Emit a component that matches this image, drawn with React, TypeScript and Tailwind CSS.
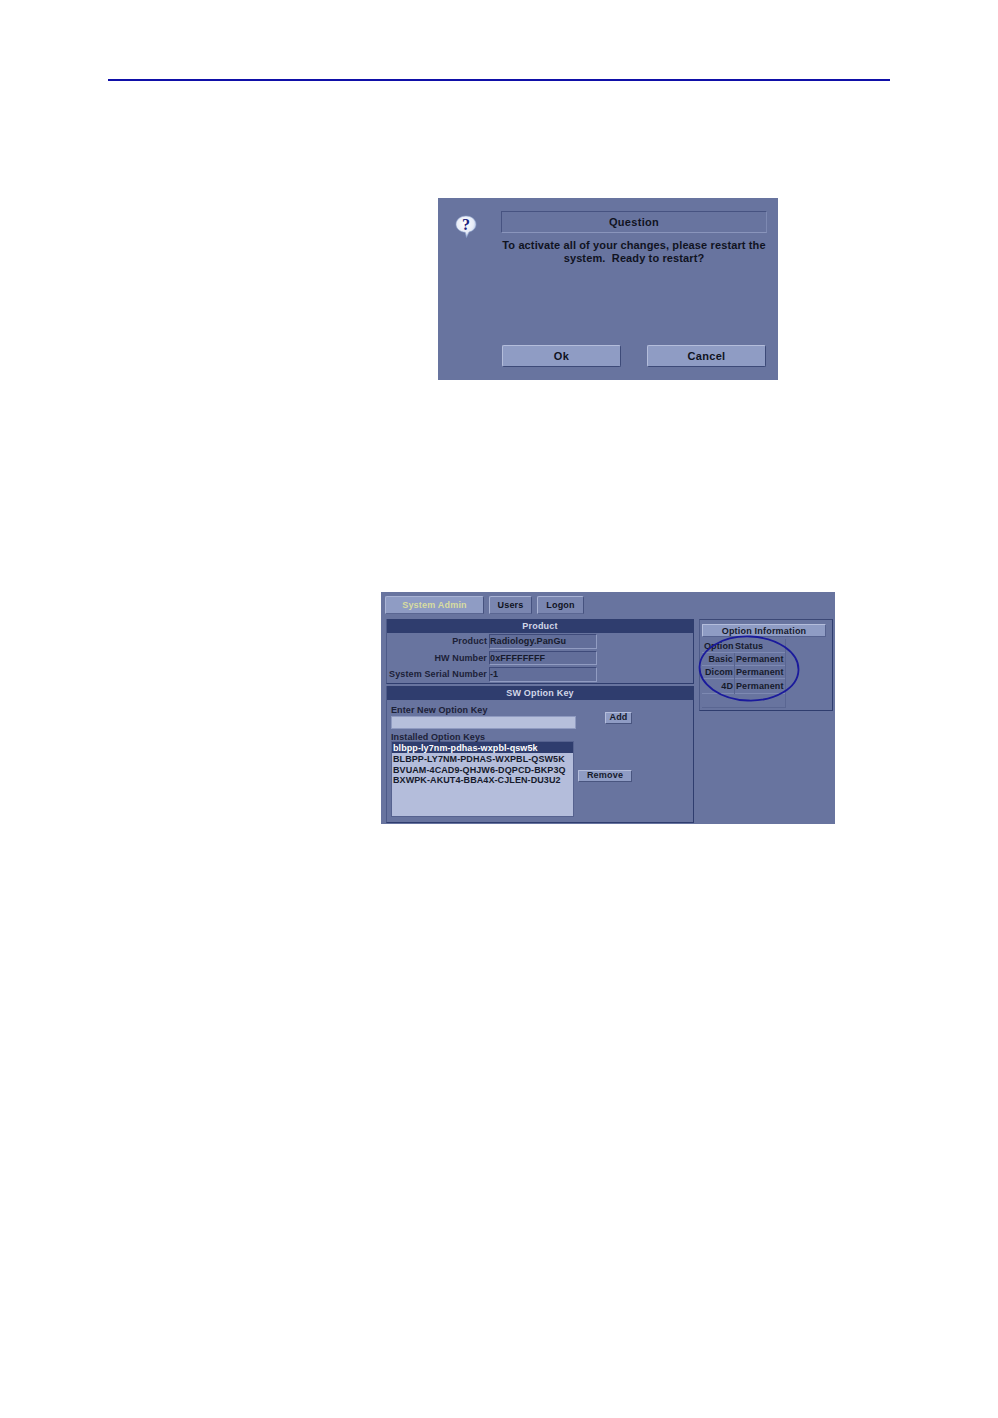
const font = "font-['Liberation_Sans',Arial,sans-serif]";

const optionKeys = [
  "BLBPP-LY7NM-PDHAS-WXPBL-QSW5K",
  "BVUAM-4CAD9-QHJW6-DQPCD-BKP3Q",
  "BXWPK-AKUT4-BBA4X-CJLEN-DU3U2",
];

const productRows = [
  { label: "Product", value: "Radiology.PanGu" },
  { label: "HW Number", value: "0xFFFFFFFF" },
  { label: "System Serial Number", value: "-1" },
];

const optionRows = [
  { name: "Basic", status: "Permanent", height: "h-[13px]" },
  { name: "Dicom", status: "Permanent", height: "h-[13px]" },
  { name: "4D", status: "Permanent", height: "h-[15px]" },
];

function QuestionIcon() {
  return (
    <svg width="22" height="24" viewBox="0 0 22 24">
      <defs>
        <radialGradient id="bubble" cx="45%" cy="35%" r="65%">
          <stop offset="0%" stopColor="#ffffff" />
          <stop offset="65%" stopColor="#e6ebf7" />
          <stop offset="100%" stopColor="#9fb2dc" />
        </radialGradient>
      </defs>
      <path d="M11 1c5.300 0 10 3.500 10 8.300 0 3.900-3 6.900-7 7.800L11.500 22.500l-1.300-5.200C5 17 1 13.600 1 9.300 1 4.500 5.700 1 11 1z" fill="url(#bubble)" stroke="#8fa2cc" strokeWidth="0.600" />
      <text x="11" y="15" textAnchor="middle" fontSize="16" fontWeight="700" fill="#1a237e" fontFamily="'Liberation Serif', serif">?</text>
    </svg>
  );
}

function DialogButton({ label }: { label: string }) {
  return (
    <div className="flex h-[22px] w-[119px] items-center justify-center rounded-[2px] border border-t-[#b4bddb] border-l-[#b4bddb] border-b-[#3d4a78] border-r-[#3d4a78] bg-[#8f9cc4] text-[11px] font-bold tracking-[0.3px] text-[#10131f]">
      {label}
    </div>
  );
}

function QuestionDialog() {
  return (
    <div className="ml-[330px] flex h-[182px] w-[340px] bg-[#68749f]">
      <div className="w-[63px] shrink-0 pl-[17px] pt-[17px]">
        <QuestionIcon />
      </div>
      <div className="flex w-[266px] flex-col pt-[13px]">
        <div className="flex h-[22px] items-center justify-center border border-t-[#475381] border-l-[#475381] border-b-[#8a95bc] border-r-[#7d89b2] text-[11px] font-bold tracking-[0.3px] text-[#10131f]">
          Question
        </div>
        <p className="mt-[6px] text-center text-[11px] leading-[13px] font-bold tracking-[0.12px] whitespace-pre text-[#10131f]">
          {"To activate all of your changes, please restart the\nsystem.  Ready to restart?"}
        </p>
        <div className="mt-auto mb-[13px] flex gap-[26px] pl-px">
          <DialogButton label="Ok" />
          <DialogButton label="Cancel" />
        </div>
      </div>
    </div>
  );
}

function Tab({ label, className }: { label: string; className: string }) {
  return (
    <div className={`flex h-[18px] items-center justify-center rounded-t-[2px] border border-t-[#a9b3d4] border-l-[#a9b3d4] border-b-[#5a6692] border-r-[#46527f] pt-px text-[9px] font-bold tracking-[0.2px] ${className}`}>
      {label}
    </div>
  );
}

function SectionHeader({ label }: { label: string }) {
  return (
    <div className="flex h-[14px] items-center justify-center bg-[#2f3d6e] pt-px text-[9px] font-bold tracking-[0.2px] text-[#d2d7e8]">
      {label}
    </div>
  );
}

function SmallButton({ label, className }: { label: string; className: string }) {
  return (
    <div className={`flex h-[12px] items-center justify-center rounded-[1px] border border-t-[#b4bddb] border-l-[#b4bddb] border-b-[#49557f] border-r-[#49557f] bg-[#8f9cc4] text-[9px] font-bold tracking-[0.2px] text-[#161a2c] ${className}`}>
      {label}
    </div>
  );
}

function ProductSection() {
  return (
    <div className="h-[65px] w-[308px] border-r border-b border-[#2f3d6e] border-l border-l-[#4d5a88]">
      <SectionHeader label="Product" />
      <div className="flex flex-col gap-[2px] pt-[1px]">
        {productRows.map((row) => (
          <div key={row.label} className="flex h-[14.500px] items-center">
            <div className="w-[100px] shrink-0 pt-px text-right text-[9px] font-bold tracking-[0.12px] whitespace-nowrap text-[#1c2138]">
              {row.label}
            </div>
            <div className="ml-[2px] flex h-full w-[108px] items-center border border-t-[#3f4b7a] border-l-[#3f4b7a] border-b-[#919cc2] border-r-[#919cc2] bg-[#626e9a] pt-px text-[9px] font-bold tracking-[0.12px] text-[#161a2c]">
              {row.value}
            </div>
          </div>
        ))}
      </div>
    </div>
  );
}

function OptionKeySection() {
  return (
    <div className="mt-[2px] h-[137px] w-[308px] border-r border-b border-[#2f3d6e] border-l border-l-[#4d5a88]">
      <SectionHeader label="SW Option Key" />
      <div className="flex pl-[3px]">
        <div className="w-[188px] shrink-0">
          <div className="mt-[5px] ml-px h-[10px] text-[9px] leading-[10px] font-bold tracking-[0.1px] whitespace-nowrap text-[#1c2138]">
            Enter New Option Key
          </div>
          <div className="mt-px ml-px h-[13px] w-[185px] border border-[#8f9ac0] bg-[#b6bfdb]" />
          <div className="mt-[3px] ml-px h-[9px] text-[9px] leading-[10px] font-bold tracking-[0.1px] whitespace-nowrap text-[#1c2138]">
            Installed Option Keys
          </div>
          <div className="ml-px h-[76px] w-[183px] border border-[#56628f] bg-[#b4bddb]">
            <div className="h-[11px] bg-[#2f3d6e] pl-px text-[9px] leading-[12px] font-bold tracking-[0.09px] text-white">
              blbpp-ly7nm-pdhas-wxpbl-qsw5k
            </div>
            <div className="flex flex-col pt-px">
              {optionKeys.map((key) => (
                <div key={key} className="h-[10.500px] pl-px text-[9px] leading-[10.500px] font-bold tracking-[0.09px] whitespace-nowrap text-[#161a2c]">
                  {key}
                </div>
              ))}
            </div>
          </div>
        </div>
        <div className="flex w-[60px] flex-col">
          <SmallButton label="Add" className="mt-[12px] ml-[27px] w-[27px]" />
          <SmallButton label="Remove" className="mt-[46px] w-[54px]" />
        </div>
      </div>
    </div>
  );
}

function OptionPanel() {
  return (
    <div className="relative ml-[5px] h-[92px] w-[134px] border border-t-[#3b4775] border-l-[#4d5a88] border-b-[#2f3d6e] border-r-[#2f3d6e] pt-1 pl-[2px]">
      <div className="flex h-[13px] w-[124px] items-center justify-center rounded-[1px] border border-t-[#b4bddb] border-l-[#b4bddb] border-b-[#56628f] border-r-[#56628f] bg-[#8f9cc4] pt-[2px] text-[9px] font-bold tracking-[0.2px] text-[#161a2c]">
        Option Information
      </div>
      <div className="mt-[2px] h-[69px] w-[84px] border-r border-b border-[#5a6692]">
        <div className="flex h-[14px] items-center border-b border-[#7d89b2] pt-[2px] text-[9px] font-bold tracking-[0.12px] text-[#161a2c]">
          <div className="w-[33px] pl-[2px]">Option</div>
          <div>Status</div>
        </div>
        {optionRows.map((row) => (
          <div key={row.name} className={`flex items-center border-b border-[#7d89b2] pt-[2px] text-[9px] font-bold tracking-[0.12px] text-[#161a2c] ${row.height}`}>
            <div className="w-[32px] pr-px text-right">{row.name}</div>
            <div className="border-l border-[#57638f] pl-px">{row.status}</div>
          </div>
        ))}
      </div>
      {/* hand drawn annotation round the table */}
      <svg className="absolute top-[14px] left-[-2px]" width="104" height="70" viewBox="0 0 104 70">
        <ellipse cx="51" cy="34.500" rx="49.500" ry="32" fill="none" stroke="#1a1a9c" strokeWidth="1.800" transform="rotate(2 51 35)" />
      </svg>
    </div>
  );
}

function SystemAdminPanel() {
  return (
    <div className="mt-[212px] ml-[273px] h-[232px] w-[454px] bg-[#68749f] pt-1 pl-1">
      <div className="flex gap-[5px]">
        <Tab label="System Admin" className="w-[99px] bg-[#8f9cc4] text-[#d8dca0]" />
        <Tab label="Users" className="w-[43px] bg-[#7a86b0] text-[#10131f]" />
        <Tab label="Logon" className="w-[47px] bg-[#7a86b0] text-[#10131f]" />
      </div>
      <div className="mt-[5px] flex pl-px">
        <div>
          <ProductSection />
          <OptionKeySection />
        </div>
        <OptionPanel />
      </div>
    </div>
  );
}

export default function App() {
  return (
    <div className={`h-[1418px] w-[998px] bg-white px-[108px] pt-[79px] ${font}`}>
      <div className="mb-[117px] h-[2px] w-[782px] bg-[#0f0fa8]" />
      <QuestionDialog />
      <SystemAdminPanel />
    </div>
  );
}
